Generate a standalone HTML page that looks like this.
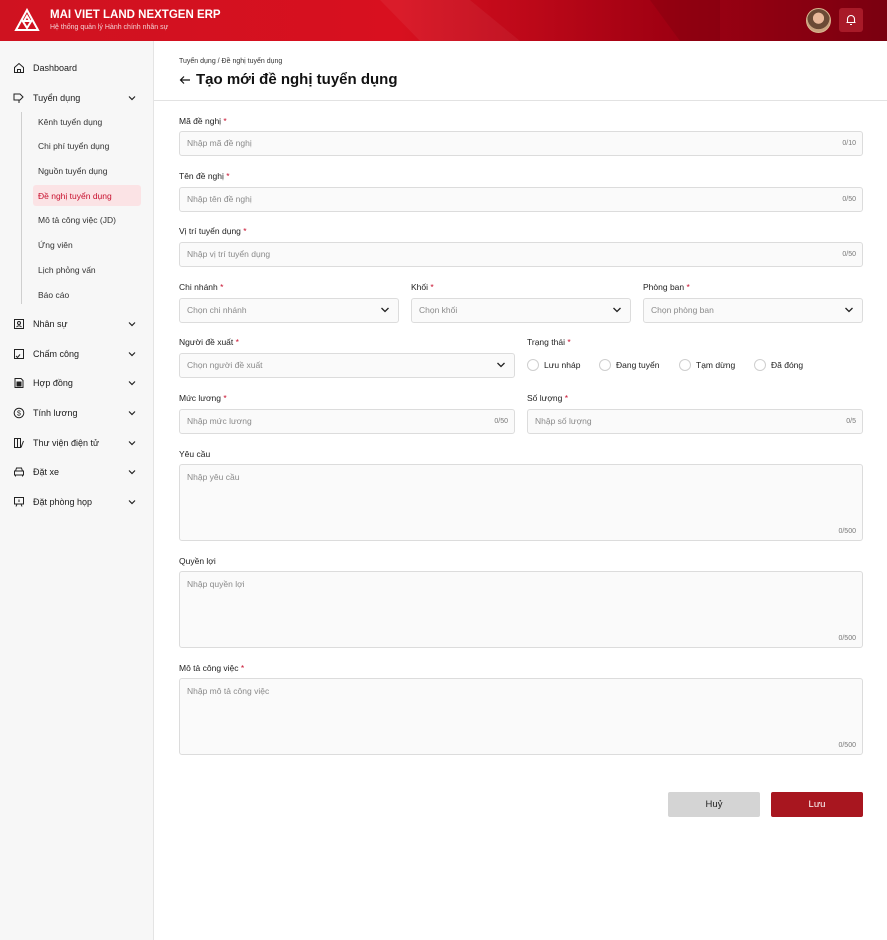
<!DOCTYPE html>
<html><head><meta charset="utf-8"><style>
*{box-sizing:border-box;margin:0;padding:0}
body{width:887px;height:940px;font-family:"Liberation Sans","Noto Sans CJK SC",sans-serif;background:#fff;position:relative;overflow:hidden;color:#1a1a1a}
.hdr{position:absolute;left:0;top:0;width:887px;height:41px;background:linear-gradient(90deg,#cf1220 0%,#d8101f 45%,#a00012 75%,#7a0010 100%);overflow:hidden}
.side{position:absolute;left:0;top:41px;width:154px;height:899px;background:#f7f7f7;border-right:1px solid #e4e4e4}
.a{position:absolute;white-space:nowrap}
.ni{position:absolute;left:13px;font-size:9px;color:#1a1a1a;white-space:nowrap}
.ni svg{position:absolute;left:0;top:-1px}
.ni span{position:absolute;left:20px;top:0;white-space:nowrap}
.chev{position:absolute;left:127px}
.sub{position:absolute;left:38px;font-size:8.5px;color:#333;white-space:nowrap}
.lbl{position:absolute;font-size:8.5px;color:#222;white-space:nowrap}
.lbl b{color:#c8102e;font-weight:normal}
.in{position:absolute;height:25px;border:1px solid #dcdcdc;border-radius:3px;background:#fafafa;font-size:8.5px;color:#8a8a8a;padding:0 7px;line-height:23px;white-space:nowrap}
.cnt{position:absolute;right:6px;font-size:7px;color:#777;line-height:23px;top:0}
.ta{line-height:normal;padding-top:7px}
.ta .cnt{top:auto;bottom:2px;line-height:12px}
.dd{position:absolute;right:8px;top:7px}
.rad{position:absolute;top:359px;font-size:8.5px;color:#222}
.rad i{position:absolute;left:0;top:0;width:12px;height:12px;border:1px solid #cfcfcf;border-radius:50%;background:#fff}
.rad span{position:absolute;left:17px;top:1px;white-space:nowrap}
</style></head><body>
<div class="hdr">
<svg class="a" style="left:380px;top:0" width="340" height="41"><polygon points="0,0 90,0 140,41 40,41" fill="rgba(255,255,255,0.05)"/><polygon points="270,0 340,0 340,41 300,41" fill="rgba(0,0,0,0.08)"/></svg>
<svg class="a" style="left:14px;top:8px" width="26" height="26" viewBox="0 0 26 26" fill="none" stroke="#fff" stroke-width="2"><path d="M13 2 L24 22 L2 22 Z"/><path d="M8 12 L13 20 L18 12"/><path d="M13 8 L16 13 L10 13 Z"/></svg>
<div class="a" style="left:50px;top:9px;color:#fff;font-weight:bold;font-size:11.5px">MAI VIET LAND NEXTGEN ERP</div>
<div class="a" style="left:50px;top:24px;color:#f3d0d3;font-size:7px">Hệ thống quản lý Hành chính nhân sự</div>
<div class="a" style="left:806px;top:8px;width:25px;height:25px;border-radius:50%;background:radial-gradient(circle at 50% 40%,#e9b89a 0 30%,#6b4a35 32% 60%,#c9a27e 62%);border:1.5px solid #d9b48f"></div>
<div class="a" style="left:839px;top:8px;width:24px;height:24px;border-radius:3px;background:#a81a28"><svg class="a" style="left:6px;top:5px" width="12" height="13" viewBox="0 0 12 13" fill="none" stroke="#fff" stroke-width="1.1"><path d="M2.5 9.5 V6 a3.5 3.5 0 0 1 7 0 V9.5 H2.5 Z M1.5 9.5 H10.5 M5 11.5 H7"/></svg></div>
</div>
<div class="side">
<div class="ni" style="top:22px"><svg width="12" height="12" viewBox="0 0 12 12" fill="none" stroke="#222"><path d="M1.5 5.5 L6 1.5 L10.5 5.5 V10.5 H1.5 Z M4.5 10.5 V7.5 H7.5 V10.5"/></svg><span>Dashboard</span></div>
<div class="ni" style="top:52px"><svg width="12" height="12" viewBox="0 0 12 12" fill="none" stroke="#222"><path d="M1 2 H7 L10 5 L7 8 H1 Z M6 8 L6 11"/></svg><span>Tuyển dụng</span></div>
<svg class="chev" style="top:53px" width="10" height="8" viewBox="0 0 10 8" fill="none" stroke="#222" stroke-width="1.2"><path d="M2 2.5 L5 5.5 L8 2.5"/></svg>
<div class="a" style="left:21px;top:71px;width:1px;height:192px;background:#cfcfcf"></div>
<div class="sub" style="top:76px">Kênh tuyển dụng</div>
<div class="sub" style="top:100px">Chi phí tuyển dụng</div>
<div class="sub" style="top:125px">Nguồn tuyển dụng</div>
<div class="a" style="left:33px;top:144px;width:108px;height:21px;background:#fbe3e5;border-radius:3px"></div>
<div class="sub" style="top:150px;color:#c8102e">Đề nghị tuyển dụng</div>
<div class="sub" style="top:174px">Mô tả công việc (JD)</div>
<div class="sub" style="top:199px">Ứng viên</div>
<div class="sub" style="top:224px">Lịch phỏng vấn</div>
<div class="sub" style="top:249px">Báo cáo</div>
<div class="ni" style="top:278px"><svg width="12" height="12" viewBox="0 0 12 12" fill="none" stroke="#222"><rect x="1.5" y="1.5" width="9" height="9"/><circle cx="6" cy="5" r="1.5"/><path d="M3.5 9 Q6 6.5 8.5 9"/></svg><span>Nhân sự</span></div>
<div class="ni" style="top:308px"><svg width="12" height="12" viewBox="0 0 12 12" fill="none" stroke="#222"><rect x="1.5" y="1.5" width="9" height="9"/><path d="M3 8 L4.5 9.5 L7 6.5"/></svg><span>Chấm công</span></div>
<div class="ni" style="top:337px"><svg width="12" height="12" viewBox="0 0 12 12" fill="none" stroke="#222"><path d="M2 1.5 H8 L10 3.5 V10.5 H2 Z"/><rect x="4" y="5" width="4" height="4" fill="#222"/></svg><span>Hợp đồng</span></div>
<div class="ni" style="top:367px"><svg width="12" height="12" viewBox="0 0 12 12" fill="none" stroke="#222"><circle cx="6" cy="6" r="4.8"/><text x="6" y="8.5" font-size="7" text-anchor="middle" fill="#222" stroke="none">$</text></svg><span>Tính lương</span></div>
<div class="ni" style="top:397px"><svg width="12" height="12" viewBox="0 0 12 12" fill="none" stroke="#222"><rect x="1.5" y="1.5" width="3" height="9"/><rect x="4.5" y="1.5" width="3" height="9"/><path d="M8 10.5 L10.5 4"/></svg><span>Thư viện điện tử</span></div>
<div class="ni" style="top:426px"><svg width="12" height="12" viewBox="0 0 12 12" fill="none" stroke="#222"><path d="M2.5 5 L3.5 2 H8.5 L9.5 5 M1.5 5 H10.5 V9 H1.5 Z M2.5 9 V10.5 M9.5 9 V10.5"/></svg><span>Đặt xe</span></div>
<div class="ni" style="top:456px"><svg width="12" height="12" viewBox="0 0 12 12" fill="none" stroke="#222"><rect x="1.5" y="1.5" width="9" height="6.5"/><path d="M3 10.5 L4 8 M9 10.5 L8 8 M6 3.5 V6"/></svg><span>Đặt phòng họp</span></div>
<svg class="chev" style="top:279px" width="10" height="8" viewBox="0 0 10 8" fill="none" stroke="#222" stroke-width="1.2"><path d="M2 2.5 L5 5.5 L8 2.5"/></svg>
<svg class="chev" style="top:309px" width="10" height="8" viewBox="0 0 10 8" fill="none" stroke="#222" stroke-width="1.2"><path d="M2 2.5 L5 5.5 L8 2.5"/></svg>
<svg class="chev" style="top:338px" width="10" height="8" viewBox="0 0 10 8" fill="none" stroke="#222" stroke-width="1.2"><path d="M2 2.5 L5 5.5 L8 2.5"/></svg>
<svg class="chev" style="top:368px" width="10" height="8" viewBox="0 0 10 8" fill="none" stroke="#222" stroke-width="1.2"><path d="M2 2.5 L5 5.5 L8 2.5"/></svg>
<svg class="chev" style="top:398px" width="10" height="8" viewBox="0 0 10 8" fill="none" stroke="#222" stroke-width="1.2"><path d="M2 2.5 L5 5.5 L8 2.5"/></svg>
<svg class="chev" style="top:427px" width="10" height="8" viewBox="0 0 10 8" fill="none" stroke="#222" stroke-width="1.2"><path d="M2 2.5 L5 5.5 L8 2.5"/></svg>
<svg class="chev" style="top:457px" width="10" height="8" viewBox="0 0 10 8" fill="none" stroke="#222" stroke-width="1.2"><path d="M2 2.5 L5 5.5 L8 2.5"/></svg>
</div>

<div class="a" style="left:179px;top:58px;font-size:7px;color:#333">Tuyển dụng / Đề nghị tuyển dụng</div>
<svg class="a" style="left:179px;top:74px" width="12" height="12" viewBox="0 0 12 12" fill="none" stroke="#111" stroke-width="1.2"><path d="M11 6 H1.5 M5 2.5 L1.5 6 L5 9.5"/></svg>
<div class="a" style="left:196px;top:71px;font-size:15px;font-weight:bold;color:#111">Tạo mới đề nghị tuyển dụng</div>
<div class="a" style="left:154px;top:100px;width:733px;height:1px;background:#e2e2e2"></div>

<div class="lbl" style="left:179px;top:116px">Mã đề nghị <b>*</b></div>
<div class="in" style="left:179px;top:131px;width:684px">Nhập mã đề nghị<span class="cnt">0/10</span></div>
<div class="lbl" style="left:179px;top:171px">Tên đề nghị <b>*</b></div>
<div class="in" style="left:179px;top:187px;width:684px">Nhập tên đề nghị<span class="cnt">0/50</span></div>
<div class="lbl" style="left:179px;top:226px">Vị trí tuyển dụng <b>*</b></div>
<div class="in" style="left:179px;top:242px;width:684px">Nhập vị trí tuyển dụng<span class="cnt">0/50</span></div>

<div class="lbl" style="left:179px;top:282px">Chi nhánh <b>*</b></div>
<div class="lbl" style="left:411px;top:282px">Khối <b>*</b></div>
<div class="lbl" style="left:643px;top:282px">Phòng ban <b>*</b></div>
<div class="in" style="left:179px;top:298px;width:220px">Chọn chi nhánh<svg class="dd" width="10" height="8" viewBox="0 0 10 8" fill="none" stroke="#222" stroke-width="1.3"><path d="M1.5 2 L5 5.5 L8.5 2"/></svg></div>
<div class="in" style="left:411px;top:298px;width:220px">Chọn khối<svg class="dd" width="10" height="8" viewBox="0 0 10 8" fill="none" stroke="#222" stroke-width="1.3"><path d="M1.5 2 L5 5.5 L8.5 2"/></svg></div>
<div class="in" style="left:643px;top:298px;width:220px">Chọn phòng ban<svg class="dd" width="10" height="8" viewBox="0 0 10 8" fill="none" stroke="#222" stroke-width="1.3"><path d="M1.5 2 L5 5.5 L8.5 2"/></svg></div>

<div class="lbl" style="left:179px;top:337px">Người đề xuất <b>*</b></div>
<div class="lbl" style="left:527px;top:337px">Trạng thái <b>*</b></div>
<div class="in" style="left:179px;top:353px;width:336px">Chọn người đề xuất<svg class="dd" width="10" height="8" viewBox="0 0 10 8" fill="none" stroke="#222" stroke-width="1.3"><path d="M1.5 2 L5 5.5 L8.5 2"/></svg></div>
<div class="rad" style="left:527px"><i></i><span>Lưu nháp</span></div>
<div class="rad" style="left:599px"><i></i><span>Đang tuyển</span></div>
<div class="rad" style="left:679px"><i></i><span>Tạm dừng</span></div>
<div class="rad" style="left:754px"><i></i><span>Đã đóng</span></div>

<div class="lbl" style="left:179px;top:393px">Mức lương <b>*</b></div>
<div class="lbl" style="left:527px;top:393px">Số lượng <b>*</b></div>
<div class="in" style="left:179px;top:409px;width:336px">Nhập mức lương<span class="cnt">0/50</span></div>
<div class="in" style="left:527px;top:409px;width:336px">Nhập số lượng<span class="cnt">0/5</span></div>

<div class="lbl" style="left:179px;top:449px">Yêu cầu</div>
<div class="in ta" style="left:179px;top:464px;width:684px;height:77px">Nhập yêu cầu<span class="cnt">0/500</span></div>
<div class="lbl" style="left:179px;top:556px">Quyền lợi</div>
<div class="in ta" style="left:179px;top:571px;width:684px;height:77px">Nhập quyền lợi<span class="cnt">0/500</span></div>
<div class="lbl" style="left:179px;top:663px">Mô tả công việc <b>*</b></div>
<div class="in ta" style="left:179px;top:678px;width:684px;height:77px">Nhập mô tả công việc<span class="cnt">0/500</span></div>

<div class="a" style="left:668px;top:792px;width:92px;height:25px;background:#d4d4d4;border-radius:2px;text-align:center;line-height:25px;font-size:9.5px;color:#222">Huỷ</div>
<div class="a" style="left:771px;top:792px;width:92px;height:25px;background:#a8161f;border-radius:2px;text-align:center;line-height:25px;font-size:9.5px;color:#fff">Lưu</div>
</body></html>
